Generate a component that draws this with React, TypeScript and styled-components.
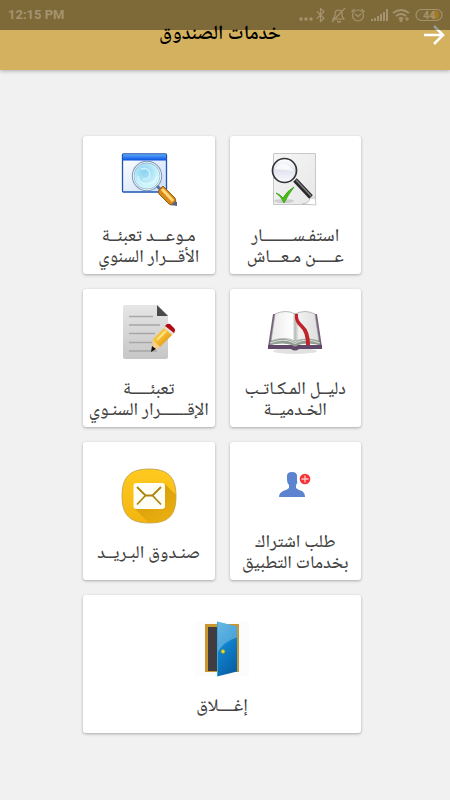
import React from "react";
import styled, { createGlobalStyle } from "styled-components";

const GlobalStyle = createGlobalStyle`
  *, *::before, *::after { box-sizing: border-box; }
  body {
    margin: 0;
    background: #f1f1f1;
    font-family: "Noto Naskh Arabic", "DejaVu Sans", sans-serif;
  }
`;

const Page = styled.div`
  position: relative;
  min-height: 100vh;
`;

const StatusBar = styled.div`
  position: absolute;
  inset: 0 0 auto 0;
  z-index: 2;
  height: 30px;
  padding: 0 6px 0 8px;
  display: flex;
  align-items: center;
  justify-content: space-between;
  background: rgba(0, 0, 0, 0.4);
  color: #a59370;
  font: 700 13px/30px Roboto, sans-serif;
`;

const Header = styled.header`
  display: grid;
  grid-template-columns: 32px 1fr 32px;
  align-items: center;
  height: 70px;
  background: #d3b15f;
  box-shadow: 0 1px 4px rgba(0, 0, 0, 0.3);
`;

const Title = styled.h1`
  margin: 0;
  padding-right: 10px;
  grid-column: 2;
  text-align: center;
  color: #000;
  font-size: 20px;
  font-weight: 600;
  line-height: 24px;
`;

const BackButton = styled.button`
  display: flex;
  justify-content: center;
  padding: 0;
  border: 0;
  background: none;
  color: #fff;
`;

const Body = styled.div`
  padding: 66px 6px 24px 0;
`;

const Grid = styled.main`
  display: grid;
  grid-template-columns: repeat(2, 1fr);
  grid-auto-rows: 138px;
  gap: 15px;
  width: 63%;
  max-width: calc(100% - 166px);
  margin: 0 auto;
`;

const Card = styled.button<{ $wide?: boolean }>`
  grid-column: ${(p) => (p.$wide ? "1 / -1" : "auto")};
  display: flex;
  flex-direction: column;
  align-items: center;
  justify-content: center;
  gap: 20px;
  padding: 10px 0 0;
  border: 0;
  border-radius: 3px;
  background: #fff;
  box-shadow: 0 1px 3px rgba(0, 0, 0, 0.3);
  color: #434343;
  font-family: inherit;
  font-size: 18px;
  font-weight: 500;
  line-height: 21px;
`;

const Label = styled.span`
  display: block;
  white-space: pre;
`;

const Icon = styled.svg.attrs({ viewBox: "0 0 56 56", "aria-hidden": true })`
  display: block;
  flex: none;
  width: 56px;
  height: 56px;
`;

const WindowSearch = () => (
  <Icon>
    <defs>
      <linearGradient id="wBar" x2="0" y2="1"><stop stopColor="#58a7fa" /><stop offset="1" stopColor="#064fe0" /></linearGradient>
      <linearGradient id="wBody" x2="1" y2="1"><stop stopColor="#fff" /><stop offset="1" stopColor="#ccdcf8" /></linearGradient>
      <radialGradient id="wLens" cx=".4" cy=".35"><stop stopColor="#8ad4f2" /><stop offset=".45" stopColor="#a5e0f5" /><stop offset="1" stopColor="#cff5fa" /></radialGradient>
    </defs>
    <rect x="1.5" y="3" width="44" height="38" rx="1" fill="url(#wBody)" stroke="#1c55b4" strokeWidth="1.3" />
    <path d="M2 3.5h43v6H2z" fill="url(#wBar)" />
    <circle cx="26" cy="25" r="14" fill="url(#wLens)" stroke="#7b98bd" strokeWidth="2.4" />
    <circle cx="26" cy="25" r="13.7" fill="none" stroke="#e4edf2" strokeWidth="1.1" />
    <path d="M20 18q8-2 9 5 0 6-7 5M17 25q0 7 8 8 9 0 11-8" fill="none" stroke="#e4faff" strokeWidth="1.4" opacity=".75" />
    <path d="M36 35l3 3" stroke="#57729d" strokeWidth="3" />
    <path d="M38 39l4-4 12 12q2 3-1 6-3 2-5 0L38 43q-1-2 0-4z" fill="#d98915" stroke="#93601e" />
    <path d="M41 38l11 12" stroke="#ffd67a" strokeWidth="3" />
    <path d="M50 54q4-5 6-3v4z" fill="#59637b" />
  </Icon>
);

const PageSearch = () => (
  <Icon>
    <defs>
      <linearGradient id="pPaper" x2="1" y2="1"><stop stopColor="#f6f6f6" /><stop offset="1" stopColor="#e7e7e7" /></linearGradient>
      <linearGradient id="pLens" x2="0" y2="1"><stop stopColor="#fff" /><stop offset=".5" stopColor="#e1e3ee" /><stop offset="1" stopColor="#fafaff" /></linearGradient>
    </defs>
    <path d="M6.5 2.5h42v46l-5 5h-37z" fill="url(#pPaper)" stroke="#c8c8c8" />
    <path d="M35 53q8-1 8-6 4 1 5-1l1 8z" fill="#fff" stroke="#bbb" strokeWidth=".8" />
    <ellipse cx="17" cy="50" rx="10" ry="2" fill="#bbb" opacity=".6" />
    <path d="M9 42q4 1 7 5 4-7 11-11-6 8-10 16-3-7-8-10z" fill="#48bf13" stroke="#2d9807" strokeWidth=".7" />
    <path d="M28 29l16 17" stroke="#28282b" strokeWidth="5" />
    <path d="M29 29l15 16" stroke="#85858b" strokeWidth="1.2" />
    <circle cx="17.5" cy="19.5" r="12" fill="url(#pLens)" stroke="#333438" strokeWidth="1.7" />
    <path d="M8 18q9-11 19 2" fill="#fff" opacity=".7" />
  </Icon>
);

const DocumentPencil = () => (
  <Icon>
    <defs>
      <linearGradient id="dPaper" x2="0" y2="1"><stop stopColor="#e6e6e6" /><stop offset="1" stopColor="#c6c6c6" /></linearGradient>
      <linearGradient id="dPen" x2="1" y2="1"><stop stopColor="#ffe16c" /><stop offset=".5" stopColor="#f1b328" /><stop offset="1" stopColor="#c67d0d" /></linearGradient>
    </defs>
    <path d="M4 1h32l11 10v42q0 2-2 2H4q-2 0-2-2V3q0-2 2-2z" fill="url(#dPaper)" />
    <path d="M36 1l11 11H36z" fill="#494a4b" />
    <path d="M8 12.5h24M8 21h31M8 29.5h26M8 38.5h23M8 47h28" stroke="#a7a7a7" strokeWidth="1.3" />
    <path d="M31 43l1-8 13-13 8 7-14 14-8 4z" fill="url(#dPen)" />
    <path d="M32 36l7 7-8 4z" fill="#f4cf8e" />
    <path d="M31 42l4 3-5 3z" fill="#111" />
    <path d="M43 24l8 7 3-3-8-7z" fill="#e6e1d6" />
    <path d="M44 22q2-3 5-2l4 4q2 2 0 5z" fill="#b10a15" />
    <path d="M36 36l9-9" stroke="#ffe684" strokeWidth="2" />
  </Icon>
);

const Book = () => (
  <Icon>
    <defs>
      <linearGradient id="bPage"><stop stopColor="#e9eae9" /><stop offset=".45" stopColor="#fff" /><stop offset=".5" stopColor="#b3bab5" /><stop offset=".58" stopColor="#f1f1f1" /><stop offset="1" stopColor="#dedede" /></linearGradient>
    </defs>
    <ellipse cx="28" cy="47" rx="22" ry="3" fill="#aaa" opacity=".35" />
    <path d="M6 10h4L5 43H1zM46 10h4l5 33h-4z" fill="#76617b" />
    <path d="M1 41h54v4H32q-4 3-8 0H1z" fill="#614868" />
    <path d="M4 37q13-5 24 1 11-6 24-1l1 4q-14-3-22 0-3 3-6 0-9-3-22 0z" fill="#929d91" />
    <path d="M8 10q11-5 20 0 10-5 20 0l4 27q-13-4-24 0-11-5-24 0z" fill="url(#bPage)" stroke="#979c97" strokeWidth=".7" />
    <path d="M3 39q14-5 22-1 3 3 6 0 8-4 22 1" fill="none" stroke="#dce2da" />
    <path d="M28 10q-1 8 5 13 6 5 6 18h4q0-14-7-20-6-5-5-11z" fill="#c22229" />
  </Icon>
);

const Mail = () => (
  <Icon>
    <defs>
      <linearGradient id="mBg" x2="0" y2="1"><stop stopColor="#ffca20" /><stop offset="1" stopColor="#f3b50f" /></linearGradient>
      <linearGradient id="mShadow" x1=".2" x2=".8" y2="1"><stop stopColor="#c58d04" /><stop offset="1" stopColor="#eeb411" /></linearGradient>
      <clipPath id="mClip"><path d="M28 1C46 1 55 8 55 28S47 55 28 55 1 47 1 28 9 1 28 1z" /></clipPath>
    </defs>
    <path d="M28 1C46 1 55 8 55 28S47 55 28 55 1 47 1 28 9 1 28 1z" fill="url(#mBg)" stroke="#b89d54" strokeWidth=".8" />
    <path clipPath="url(#mClip)" d="M44 16l15 15v28H32L13 40z" fill="url(#mShadow)" opacity=".8" />
    <rect x="12.5" y="15" width="31.5" height="26" rx="3" fill="#fffef5" />
    <path d="M16 19l8.5 8.5h7L40 19M16 36.5l8.5-9M40 36.5l-8.5-9" fill="none" stroke="#ae830d" strokeWidth="1.8" />
  </Icon>
);

const AddUser = () => (
  <Icon>
    <path d="M20 19q0-4 5-4t5 4v4q1 3-1 5v3q2 2 6 3 3 2 3 6H12q0-4 4-6 4-1 6-3v-3q-2-2-2-5z" fill="#5b83cf" />
    <circle cx="38" cy="22" r="5.3" fill="#f43338" />
    <path d="M38 18.5v7M34.5 22h7" stroke="#ffc9c6" strokeWidth="1.3" />
  </Icon>
);

const Door = () => (
  <Icon>
    <defs>
      <linearGradient id="door" x1=".2" x2=".6" y2="1"><stop stopColor="#46a7df" /><stop offset=".5" stopColor="#0f7ec9" /><stop offset="1" stopColor="#0862a8" /></linearGradient>
    </defs>
    <path d="M1 1h54v54H1z" fill="#fcfcfc" />
    <path d="M11 3h34v48H11z" fill="#cb962d" />
    <path d="M14 6h28v44H14z" fill="#413c40" />
    <path d="M23 .5l20 5v45l-20 5z" fill="url(#door)" />
    <path d="M23 .5l20 5v11q-14 4-20 16z" fill="#7bc2e7" opacity=".55" />
    <path d="M23.5 1v54" stroke="#38a8e4" />
    <circle cx="29" cy="30.5" r="2" fill="#efdb2c" stroke="#768b3b" strokeWidth=".6" />
  </Icon>
);

const services = [
  { label: "استفـســــــــار\nعـــــن مـعـــاش", Art: PageSearch },
  { label: "مـوعـــد تعبئــة\nالأقـــرار السنوي", Art: WindowSearch },
  { label: "دليــل المـكـاتـب\nالخـدميــة", Art: Book },
  { label: "تعبئـــــة\nالإقـــــــرار السنـوي", Art: DocumentPencil },
  { label: "طلب اشتراك\nبخدمات التطبيق", Art: AddUser },
  { label: "صنـدوق البـريــد", Art: Mail },
  { label: "إغــــلاق", Art: Door, wide: true },
];

const BatteryText = styled.text`
  fill: currentColor;
  stroke: none;
  font: 700 11px Roboto, sans-serif;
`;

const Indicators = () => (
  <svg width="145" height="20" viewBox="0 0 145 20" fill="none" stroke="currentColor" strokeWidth="1.2" aria-hidden="true">
    <g fill="currentColor" stroke="none"><circle cx="2" cy="14" r="1.7" /><circle cx="7" cy="14" r="1.7" /><circle cx="12" cy="14" r="1.7" /></g>
    <path d="M18 6.5l7 7-3.5 3v-13l3.500 3-7 7" />
    <path d="M34 14h11l-2-3V8q-1-3-3.500-3-3 0-3.500 3v3zM38 16q2 2 4 0M33 17L46 3" />
    <circle cx="59" cy="10.5" r="5.5" />
    <path d="M56 9l3 2.500L62 9M52.500 7l3-3M62.500 4l3 3" />
    <path d="M73 16v-2M76 16v-3M79 16v-5M82 16V9M85 16V7M88 16V4" strokeWidth="2" />
    <path d="M94 8q8-6 16 0M97 11q5-4 10 0M100 14q2-2 4 0" strokeWidth="1.8" />
    <circle cx="102" cy="15.5" r="1" fill="currentColor" />
    <path d="M108 12v4M106 14h4" />
    <rect x="117" y="4.5" width="26" height="11" rx="5.5" />
    <circle cx="136" cy="10" r="4.500" fill="#a37926" stroke="none" />
    <BatteryText x="124" y="14">44</BatteryText>
  </svg>
);

export default function App() {
  return (
    <Page>
      <GlobalStyle />
      <StatusBar>
        <span>12:15 PM</span>
        <Indicators />
      </StatusBar>
      <Header>
        <Title dir="rtl">خدمات الصندوق</Title>
        <BackButton type="button" aria-label="رجوع">
          <svg width="24" height="24" viewBox="0 0 24 24" fill="none" stroke="currentColor" strokeWidth="2.5" aria-hidden="true">
            <path d="M2 12h18M12 3l9 9-9 9" />
          </svg>
        </BackButton>
      </Header>
      <Body>
        <Grid dir="rtl">
          {services.map(({ label, Art, wide }) => (
            <Card key={label} $wide={wide} type="button">
              <Art />
              <Label>{label}</Label>
            </Card>
          ))}
        </Grid>
      </Body>
    </Page>
  );
}
